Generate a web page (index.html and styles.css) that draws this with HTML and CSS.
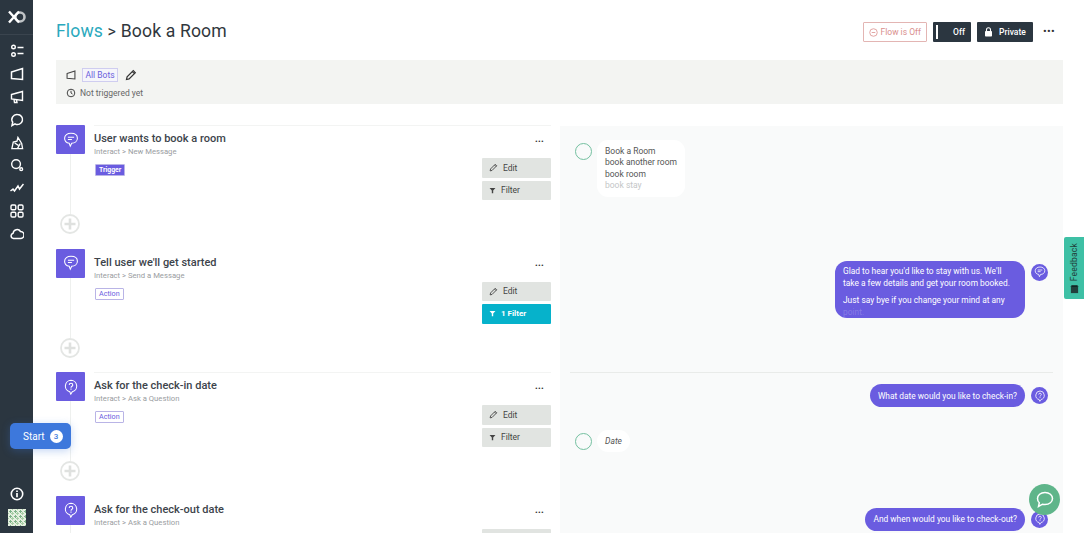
FILE: index.html
```html
<html>
<head>
    <title>Book a Room</title>
    <link rel="stylesheet" href="styles.css">
</head>
<body>
    <svg class="defs" width="0" height="0">
        <symbol id="msg" viewBox="0 0 18 18"><path d="M9 1.500c4.200 0 7.200 2.200 7.200 5.600S13.200 12.700 9.800 12.700L8.200 16 7 12.600C3.900 12.300 1.800 10.200 1.800 7.100 1.800 3.700 4.800 1.500 9 1.500z" fill="none" stroke="currentColor" stroke-width="1.200"/><path d="M5.500 6h7M5.500 8.500h4.500" stroke="currentColor" stroke-width="1.200"/></symbol>
        <symbol id="ask" viewBox="0 0 18 18"><path d="M9 1.500a6.500 6.500 0 0 1 1.500 12.800L8.800 17l-1.200-2.700A6.500 6.500 0 0 1 9 1.500z" fill="none" stroke="currentColor" stroke-width="1.200"/><path d="M7 6.700c0-2.600 4-2.600 4 0 0 1.500-2 1.500-2 3.200M9 10.800v1.300" fill="none" stroke="currentColor" stroke-width="1.200"/></symbol>
        <symbol id="pen" viewBox="0 0 12 12"><path d="M1.500 10.500l.6-2.600L8.300 1.700l2 2-6.200 6.200zM7.300 2.700l2 2" fill="none" stroke="currentColor" stroke-width="1.200"/></symbol>
        <symbol id="funnel" viewBox="0 0 10 10"><path d="M.8 1.500h8.400L6 5v3.800H4V5z" fill="currentColor"/></symbol>
        <symbol id="plus" viewBox="0 0 20 20"><circle cx="10" cy="10" r="9" fill="#fff" stroke="#e4e6e4" stroke-width="1.800"/><path d="M10 4.500v11M4.500 10h11" stroke="#dfe1df" stroke-width="2.600"/></symbol>
        <symbol id="horn" viewBox="0 0 14 14"><path d="M1.500 4.500l11-3v9l-11-1.500zM4 9.500l.5 3h2.500L6.500 10" fill="none" stroke="currentColor" stroke-width="1.400"/></symbol>
    </svg>

    <div class="app">
        <nav class="sidebar">
            <div class="logo">
                <svg width="18" height="14" viewBox="0 0 18 14"><circle cx="12" cy="7" r="4.500" fill="none" stroke="#bfc3c6" stroke-width="2.600"/><path d="M1 1.500l10 11M11 1.500l-10 11" stroke="#fff" stroke-width="2.400"/></svg>
            </div>
            <div class="nav-icons">
                <svg width="14" height="14" viewBox="0 0 14 14" fill="none" stroke="#fff" stroke-width="1.400"><circle cx="3.500" cy="3" r="1.800"/><circle cx="3.500" cy="10.500" r="1.800"/><path d="M7.500 3.500h6M7.500 9.500h6"/></svg>
                <svg width="14" height="14" viewBox="0 0 14 14" fill="none" stroke="#fff" stroke-width="1.500"><path d="M1.500 5l11-3.500v11l-11-1z"/></svg>
                <svg width="14" height="14"><use href="#horn" color="#fff"/></svg>
                <svg width="14" height="14" viewBox="0 0 14 14" fill="none" stroke="#fff" stroke-width="1.500"><path d="M7.500 1.500a5 5 0 1 1-2.500 9.300L2 12.500l.7-3.300A5 5 0 0 1 7.500 1.500z"/></svg>
                <svg width="14" height="14" viewBox="0 0 15 15" fill="none" stroke="#fff" stroke-width="1.400"><path d="M2 13.500l1.500-7 4-1 1-4 4 6.500 1 5.500zM5 7.500l4 2.500M11 8l-3 5.500"/></svg>
                <svg width="14" height="14" viewBox="0 0 15 15" fill="none" stroke="#fff" stroke-width="1.500"><circle cx="6.500" cy="6.500" r="4.700"/><circle cx="12" cy="12" r="1.500"/></svg>
                <svg width="14" height="14" viewBox="0 0 14 14" fill="none" stroke="#fff" stroke-width="1.500"><path d="M.5 10l2.500-2 1.500 2L8 5l1.500 3 4-5"/></svg>
                <svg width="14" height="14" viewBox="0 0 14 14" fill="none" stroke="#fff" stroke-width="1.400"><rect x="1" y="1" width="4.800" height="4.800" rx="1.200"/><rect x="8.200" y="1" width="4.800" height="4.800" rx="1.200"/><rect x="1" y="8.200" width="4.800" height="4.800" rx="1.200"/><rect x="8.200" y="8.200" width="4.800" height="4.800" rx="1.200"/></svg>
                <svg width="14" height="14" viewBox="0 0 14 14" fill="none" stroke="#fff" stroke-width="1.500"><path d="M3.500 11.500a2.700 2.700 0 0 1-.4-5.300A4 4 0 0 1 10.500 4.500a3.500 3.500 0 0 1 0 7z"/></svg>
            </div>
            <div class="nav-bottom">
                <svg width="14" height="14" viewBox="0 0 14 14"><circle cx="7" cy="7" r="5.700" fill="none" stroke="#fff" stroke-width="1.600"/><path d="M7 6v4.200M7 3.500v1.400" stroke="#fff" stroke-width="1.700"/></svg>
                <div class="avatar"></div>
            </div>
        </nav>

        <main class="main">
            <header class="top">
                <h1 class="crumbs"><a class="crumb-link">Flows</a> <span class="crumb-sep">&gt;</span> Book a Room</h1>
                <div class="top-actions">
                    <span class="flow-off">
                        <svg width="9" height="9" viewBox="0 0 10 10"><circle cx="5" cy="5" r="4.200" fill="none" stroke="#df9d9b"/><path d="M3 5h4" stroke="#df9d9b"/></svg>
                        Flow is Off
                    </span>
                    <span class="dark-btn toggle"><i class="toggle-bar"></i>Off</span>
                    <span class="dark-btn private">
                        <svg width="9" height="10" viewBox="0 0 9 10"><rect x="1" y="4" width="7" height="5.500" rx=".8" fill="#fff"/><path d="M2.500 4.500V2.800a2 2 0 0 1 4 0v1.700" fill="none" stroke="#fff" stroke-width="1.100"/></svg>
                        Private
                    </span>
                    <span class="dots big">&bull;&bull;&bull;</span>
                </div>
            </header>

            <section class="info-bar">
                <div class="info-row">
                    <svg class="info-icon" width="10" height="10" viewBox="0 0 14 14" fill="none" stroke="#444" stroke-width="1.500"><path d="M1.500 5l11-3.500v11l-11-1z"/></svg>
                    <span class="bots-tag">All Bots</span>
                    <svg class="info-pen" width="12" height="12"><use href="#pen" color="#333"/></svg>
                </div>
                <div class="info-row lower">
                    <svg class="info-icon" width="10" height="10" viewBox="0 0 10 10" fill="none" stroke="#444"><circle cx="5" cy="5" r="3.800"/><path d="M5 2.800V5l1.500 1"/></svg>
                    <span class="not-triggered">Not triggered yet</span>
                </div>
            </section>

            <div class="flow">
                <div class="steps">
                    <article class="step">
                        <div class="step-icon"><svg width="16" height="16"><use href="#msg"/></svg></div>
                        <div class="step-body">
                            <h3>User wants to book a room</h3>
                            <p>Interact &gt; New Message</p>
                            <span class="tag trigger">Trigger</span>
                        </div>
                        <div class="step-side">
                            <span class="dots">&bull;&bull;&bull;</span>
                            <a class="button"><svg width="9" height="9"><use href="#pen"/></svg>Edit</a>
                            <a class="button"><svg width="7" height="7"><use href="#funnel"/></svg>Filter</a>
                        </div>
                        <svg class="add" width="20" height="20"><use href="#plus"/></svg>
                    </article>
                    <article class="step">
                        <div class="step-icon"><svg width="16" height="16"><use href="#msg"/></svg></div>
                        <div class="step-body">
                            <h3>Tell user we'll get started</h3>
                            <p>Interact &gt; Send a Message</p>
                            <span class="tag">Action</span>
                        </div>
                        <div class="step-side">
                            <span class="dots">&bull;&bull;&bull;</span>
                            <a class="button"><svg width="9" height="9"><use href="#pen"/></svg>Edit</a>
                            <a class="button active"><svg width="7" height="7"><use href="#funnel"/></svg>1 Filter</a>
                        </div>
                        <svg class="add" width="20" height="20"><use href="#plus"/></svg>
                    </article>
                    <article class="step">
                        <div class="step-icon"><svg width="16" height="16"><use href="#ask"/></svg></div>
                        <div class="step-body">
                            <h3>Ask for the check-in date</h3>
                            <p>Interact &gt; Ask a Question</p>
                            <span class="tag">Action</span>
                        </div>
                        <div class="step-side">
                            <span class="dots">&bull;&bull;&bull;</span>
                            <a class="button"><svg width="9" height="9"><use href="#pen"/></svg>Edit</a>
                            <a class="button"><svg width="7" height="7"><use href="#funnel"/></svg>Filter</a>
                        </div>
                        <svg class="add" width="20" height="20"><use href="#plus"/></svg>
                    </article>
                    <article class="step">
                        <div class="step-icon"><svg width="16" height="16"><use href="#ask"/></svg></div>
                        <div class="step-body">
                            <h3>Ask for the check-out date</h3>
                            <p>Interact &gt; Ask a Question</p>
                        </div>
                        <div class="step-side">
                            <span class="dots">&bull;&bull;&bull;</span>
                            <a class="button"></a>
                        </div>
                    </article>
                </div>

                <aside class="preview">
                    <div class="pv-row first">
                        <div class="user-line">
                            <i class="user-dot"></i>
                            <div class="user-bubble phrases">
                                <span>Book a Room</span>
                                <span>book another room</span>
                                <span>book room</span>
                                <span class="fade">book stay</span>
                            </div>
                        </div>
                    </div>
                    <div class="pv-row ruled">
                        <div class="bot-line">
                            <div class="bot-bubble long">
                                <p>Glad to hear you'd like to stay with us. We'll take a few details and get your room booked.</p>
                                <p>Just say bye if you change your mind at any <span class="fade">point.</span></p>
                            </div>
                            <span class="bot-icon"><svg width="12" height="12"><use href="#msg"/></svg></span>
                        </div>
                    </div>
                    <div class="pv-row">
                        <div class="bot-line">
                            <div class="bot-bubble">What date would you like to check-in?</div>
                            <span class="bot-icon"><svg width="12" height="12"><use href="#ask"/></svg></span>
                        </div>
                        <div class="user-line date-line">
                            <i class="user-dot"></i>
                            <div class="user-bubble date">Date</div>
                        </div>
                    </div>
                    <div class="pv-row last">
                        <div class="bot-line">
                            <div class="bot-bubble">And when would you like to check-out?</div>
                            <span class="bot-icon"><svg width="12" height="12"><use href="#ask"/></svg></span>
                        </div>
                    </div>
                </aside>
            </div>
        </main>
    </div>

    <a class="start-btn">Start <b>3</b></a>
    <div class="feedback">
        <span>Feedback</span>
        <svg width="9" height="9" viewBox="0 0 10 10"><rect x="1" y="2" width="8" height="7" fill="#22403c"/><path d="M1 2l1-1.500h6L9 2M3.500 5h3" stroke="#22403c"/></svg>
    </div>
    <div class="chat-fab">
        <svg width="20" height="19" viewBox="0 0 20 19"><path d="M10 2.500c4.400 0 7.500 2.600 7.500 6s-3.100 6-7.500 6c-.9 0-1.700-.1-2.500-.3L3.500 16.500l.8-3.800C3.100 11.600 2.500 10.100 2.500 8.500c0-3.400 3.100-6 7.500-6z" fill="none" stroke="#fff" stroke-width="1.500"/></svg>
    </div>
</body>
</html>
```

FILE: styles.css
```css
html, body {
    margin: 0;
    padding: 0;
    height: 100%;
    overflow: hidden;
    font-family: Roboto, "Liberation Sans", sans-serif;
    font-size: 13px;
    color: #444;
    background-color: #fff;
}

.defs {
    display: block;
    height: 0;
}

.app {
    display: flex;
    height: 533px;
    overflow: hidden;
}

/* left nav */
.sidebar {
    width: 33px;
    flex: none;
    background-color: #2b3640;
    display: flex;
    flex-direction: column;
    align-items: center;
}

.logo {
    height: 34px;
    width: 100%;
    display: flex;
    align-items: center;
    justify-content: center;
    border-bottom: 1px solid #3a444e;
}

.nav-icons {
    display: flex;
    flex-direction: column;
    align-items: center;
    gap: 8.900px;
    padding-top: 9px;
}

.nav-bottom {
    margin-top: auto;
    display: flex;
    flex-direction: column;
    align-items: center;
    gap: 8px;
    padding-bottom: 7px;
}

.avatar {
    width: 18px;
    height: 17px;
    background-color: #e6efe0;
    background-image: radial-gradient(#7fb389 35%, transparent 40%), radial-gradient(#a8cfa6 35%, transparent 40%);
    background-size: 5px 5px;
    background-position: 0 0, 2px 2px;
}

/* main */
.main {
    flex: 1;
    min-width: 0;
    padding: 0 21px 0 23px;
}

.top {
    height: 60px;
    box-sizing: border-box;
    display: flex;
    align-items: center;
    justify-content: space-between;
    padding-top: 4px;
}

.crumbs {
    margin: 0;
    font-size: 17.600px;
    font-weight: 400;
    color: #30373d;
    letter-spacing: .15px;
    position: relative;
    top: -1px;
}

.crumb-link {
    color: #2aa9bd;
}

.crumb-sep {
    font-size: 16px;
}

.top-actions {
    display: flex;
    align-items: center;
    gap: 6px;
    padding-right: 8px;
}

.flow-off {
    display: flex;
    align-items: center;
    gap: 3px;
    height: 20px;
    box-sizing: border-box;
    padding: 0 5px;
    border: 1px solid #e3b5b3;
    border-radius: 1px;
    font-size: 8.500px;
    color: #d98f8c;
}

.dark-btn {
    display: flex;
    align-items: center;
    height: 20px;
    background-color: #2b3640;
    color: #fff;
    font-size: 8.500px;
    font-weight: 500;
    border-radius: 1px;
}

.toggle {
    width: 38px;
    justify-content: flex-end;
    padding-right: 6px;
    box-sizing: border-box;
    position: relative;
}

.toggle-bar {
    position: absolute;
    left: 3px;
    top: 3px;
    width: 2px;
    height: 14px;
    background-color: #fff;
}

.private {
    width: 56px;
    justify-content: center;
    gap: 6px;
}

.dots {
    color: #333;
    font-size: 8px;
    letter-spacing: .3px;
    line-height: 8px;
}

.dots.big {
    font-size: 11px;
    margin-left: 4px;
}

.info-bar {
    height: 44px;
    box-sizing: border-box;
    background-color: #f3f4f2;
    padding: 7px 0 0 10px;
}

.info-row {
    display: flex;
    align-items: center;
    height: 15px;
}

.info-row.lower {
    margin-top: 3px;
}

.info-icon {
    margin-right: 6px;
}

.lower .info-icon {
    margin-right: 4px;
}

.bots-tag {
    border: 1px solid #cfcdf0;
    padding: 0 2.500px;
    font-size: 8.500px;
    line-height: 12px;
    color: #6a5fdc;
    background-color: #f5f5fb;
}

.info-pen {
    margin-left: 7px;
}

.not-triggered {
    font-size: 8.500px;
    color: #666;
}

/* flow */
.flow {
    display: flex;
    padding-top: 21px;
    gap: 9px;
}

.steps {
    width: 495px;
    flex: none;
}

.step {
    height: 123.500px;
    box-sizing: border-box;
    position: relative;
    display: flex;
}

.step:last-child {
    height: 38px;
    overflow: hidden;
}

.step:nth-child(odd):after {
    content: "";
    position: absolute;
    left: 38px;
    right: 0;
    top: 0;
    height: 1px;
    background-color: #f3f4f3;
}

.step:before {
    content: "";
    position: absolute;
    left: 14px;
    top: 29px;
    width: 1px;
    height: 60px;
    background-color: #eef0ee;
}

.step-icon {
    width: 29px;
    height: 29px;
    flex: none;
    background-color: #6a5ce0;
    color: #fff;
    border-radius: 1px;
    display: flex;
    align-items: center;
    justify-content: center;
}

.step-body {
    flex: 1;
    padding: 6px 0 0 9px;
}

.step-body h3 {
    margin: 0;
    font-size: 11px;
    line-height: 15px;
    font-weight: 500;
    color: #3d444b;
}

.step-body p {
    margin: 0 0 6px;
    font-size: 7.700px;
    line-height: 12px;
    color: #9a9d9f;
}

.tag {
    display: inline-block;
    margin-left: 1px;
    border: 1px solid #b9b4e6;
    padding: 0 3px;
    font-size: 7.200px;
    line-height: 10px;
    color: #6a5ce0;
    border-radius: 1px;
}

.tag.trigger {
    background-color: #6a5ce0;
    color: #fff;
    font-weight: 700;
    font-size: 6.800px;
}

.step-side {
    width: 69px;
    display: flex;
    flex-direction: column;
    gap: 3px;
}

.step-side .dots {
    text-align: right;
    padding: 13px 7px 9px 0;
}

.button {
    display: flex;
    align-items: center;
    gap: 5px;
    height: 19.500px;
    flex: none;
    padding-left: 7px;
    background-color: #e1e4e1;
    color: #444;
    font-size: 8.500px;
    border-radius: 1px;
}

.button.active {
    background-color: #06b2cb;
    color: #fff;
    font-weight: 700;
    font-size: 8px;
}

.add {
    position: absolute;
    left: 4px;
    top: 89px;
}

/* right preview */
.preview {
    flex: 1;
    min-width: 0;
    margin-top: 1px;
    background-color: #f9fafa;
    height: 407px;
    padding: 0 10px;
    overflow: hidden;
}

.pv-row {
    height: 123.500px;
    box-sizing: border-box;
    padding-top: 11px;
}

.pv-row.first {
    padding-top: 14px;
}

.pv-row.last {
    height: auto;
}

.pv-row.ruled {
    border-bottom: 1px solid #e9ebe9;
}

.user-line {
    display: flex;
    align-items: flex-start;
    gap: 5px;
    padding-left: 5px;
}

.date-line {
    margin-top: 23px;
}

.user-dot {
    width: 15px;
    height: 15px;
    margin: 3px 0 0;
    border: 1px solid #74c0a0;
    border-radius: 50%;
    flex: none;
}

.user-bubble {
    background-color: #fff;
    border-radius: 11px;
    font-size: 8.500px;
    color: #555;
}

.phrases {
    display: flex;
    flex-direction: column;
    height: 57px;
    box-sizing: border-box;
    padding: 6px 8px;
    line-height: 11.400px;
    overflow: hidden;
}

.phrases .fade {
    color: #c4c6c7;
}

.date {
    padding: 5px 8px;
    line-height: 12px;
    font-style: italic;
}

.bot-line {
    display: flex;
    justify-content: flex-end;
    align-items: flex-start;
    gap: 6px;
    padding-right: 5px;
}

.bot-bubble {
    background-color: #6a5ce0;
    color: #fff;
    border-radius: 11.500px;
    font-size: 8.400px;
    line-height: 12px;
    padding: 5.500px 8px;
}

.bot-bubble.long {
    width: 190px;
    height: 57px;
    box-sizing: border-box;
    padding: 4px 8px;
    border-radius: 12px;
    overflow: hidden;
}

.bot-bubble p {
    margin: 0 0 5px;
}

.bot-bubble .fade {
    color: rgba(255, 255, 255, .2);
}

.bot-icon {
    width: 17px;
    height: 17px;
    margin-top: 3px;
    border-radius: 50%;
    background-color: #6a5ce0;
    color: #fff;
    display: flex;
    align-items: center;
    justify-content: center;
    flex: none;
}

/* floating */
.start-btn {
    position: absolute;
    left: 10px;
    top: 423px;
    width: 61px;
    height: 26px;
    box-sizing: border-box;
    padding-left: 13px;
    display: flex;
    align-items: center;
    gap: 5px;
    background-color: #3d78dc;
    color: #fff;
    font-size: 10px;
    border-radius: 5px;
    box-shadow: 0 2px 8px rgba(61, 120, 220, .3);
}

.start-btn b {
    width: 13px;
    height: 13px;
    border-radius: 50%;
    background-color: #fff;
    color: #3d78dc;
    font-size: 8px;
    font-weight: 500;
    display: flex;
    align-items: center;
    justify-content: center;
}

.feedback {
    position: absolute;
    right: 0;
    top: 237px;
    width: 20px;
    height: 62px;
    background-color: #3ec0a5;
    border-radius: 2px 0 0 2px;
    display: flex;
    flex-direction: column;
    align-items: center;
    justify-content: flex-end;
    gap: 4px;
    padding-bottom: 5px;
    box-sizing: border-box;
    color: #22403c;
    font-size: 8.500px;
}

.feedback span {
    writing-mode: vertical-rl;
    transform: rotate(180deg);
    letter-spacing: .2px;
}

.chat-fab {
    position: absolute;
    left: 1029px;
    top: 484px;
    width: 31px;
    height: 31px;
    border-radius: 50%;
    background-color: #5fb58a;
    display: flex;
    align-items: center;
    justify-content: center;
}
```
